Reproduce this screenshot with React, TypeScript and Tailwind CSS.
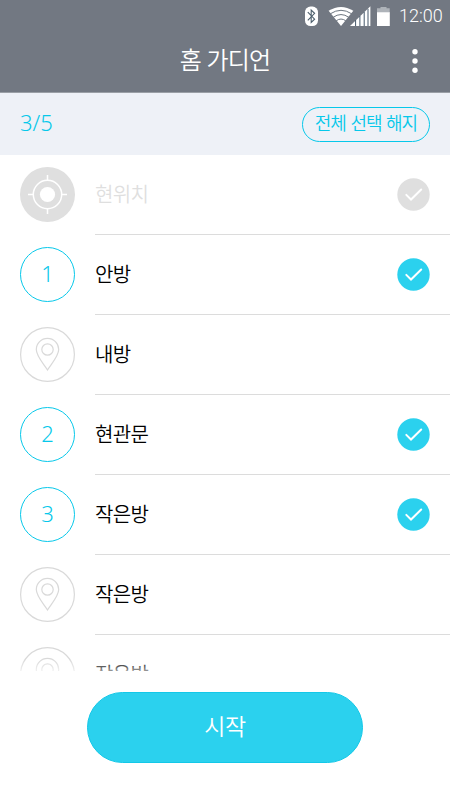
import React from "react";

type Row = { name: string; kind: "current" | "number" | "pin"; order?: number };

const rows: Row[] = [
  { name: "현위치", kind: "current" },
  { name: "안방", kind: "number", order: 1 },
  { name: "내방", kind: "pin" },
  { name: "현관문", kind: "number", order: 2 },
  { name: "작은방", kind: "number", order: 3 },
  { name: "작은방", kind: "pin" },
  { name: "작은방", kind: "pin" },
];

function StatusIcons() {
  return (
    <svg width="90" height="22" viewBox="302 4 90 22" className="block">
      <rect x="305" y="5.6" width="13" height="19.4" rx="5.5" fill="#fff" />
      <path d="M307.8 11.2l6.8 7-3.4 3.3V9l3.4 3.3-6.8 7" fill="none" stroke="#4b5d6b" strokeWidth="1.1" />
      <path d="M328.6 9.8Q341 2 353.3 9.8L341 25z" fill="#fff" />
      <g fill="none" stroke="#6d7680" strokeWidth="1">
        <path d="M330.3 12.8Q341 5.8 351.7 12.8" />
        <path d="M333.2 16.3Q341 10.8 348.8 16.3" />
        <path d="M336.2 19.8Q341 16.3 345.8 19.8" />
      </g>
      <path d="M350 25L370.4 5.2V25z" fill="#fff" />
      <path d="M355.6 19v6M359.9 15v10M364.2 11v14M368 7.8v17.2" stroke="#46596b" strokeWidth="1" />
      <path d="M377 7.2h3.5V6h6v1.2h3.2v4.2H377z" fill="#aeb3b9" />
      <path d="M377 11.2h12.8V25H377z" fill="#fff" />
    </svg>
  );
}

function Check({ muted }: { muted: boolean }) {
  return (
    <svg width="33" height="33" viewBox="0 0 33 33" className="block">
      <circle cx="16.5" cy="16.5" r="16.2" fill={muted ? "#dfdfdf" : "#2bd1ee"} />
      <path d="M9.3 16.9l4.7 4.6L24.2 11.5" fill="none" stroke="#fff" strokeWidth="2" strokeLinecap="round" />
    </svg>
  );
}

function RowIcon({ row }: { row: Row }) {
  if (row.kind === "number") {
    return (
      <div className="flex size-[55px] items-center justify-center rounded-full border border-[#06c8ea] pb-[3px] text-[22px] font-light leading-none text-[#06c8ea]">
        {row.order}
      </div>
    );
  }
  if (row.kind === "current") {
    return (
      <svg width="55" height="55" viewBox="0 0 55 55" className="block">
        <circle cx="27.5" cy="27.5" r="27.5" fill="#dfdfdf" />
        <circle cx="27.5" cy="27.5" r="7.6" fill="#fff" />
        <circle cx="27.5" cy="27.5" r="14.2" fill="none" stroke="#fff" strokeWidth="1.5" />
        <path d="M27.5 8v5M27.5 42v5M8 27.5h5M42 27.5h5" stroke="#fff" strokeWidth="1.5" />
      </svg>
    );
  }
  return (
    <svg width="55" height="55" viewBox="0 0 55 55" className="block" fill="none" stroke="#d9d9d9" strokeWidth="1.2">
      <circle cx="27.5" cy="27.5" r="26.9" />
      <circle cx="27.5" cy="22.5" r="5.7" />
      <path d="M27.5 43C24.5 37.8 16.3 29.5 16.3 22.6a11.2 11.2 0 0 1 22.4 0C38.7 29.5 30.5 37.8 27.5 43z" />
    </svg>
  );
}

export default function App() {
  return (
    <div className="flex h-[800px] w-[450px] flex-col overflow-hidden bg-white font-['Noto_Sans','Noto_Sans_CJK_KR',sans-serif]">
      <header className="h-[93px] shrink-0 border-b border-[#9a9fa6] bg-[#727882] text-white">
        <div className="flex h-[30px] items-center justify-end pr-[7px] pt-px">
          <StatusIcons />
          <span className="ml-[7px] w-[44px] whitespace-nowrap font-['Roboto',sans-serif] text-[18px] font-light leading-none">12:00</span>
        </div>
        <div className="grid h-[62px] grid-cols-[50px_1fr_50px] items-center">
          <span />
          <h1 className="pb-[5px] text-center font-['Noto_Sans_CJK_KR',sans-serif] text-[24px] font-[350] leading-none tracking-[-0.8px] [word-spacing:1px]">
            홈 가디언
          </h1>
          <svg width="6" height="26" viewBox="0 0 6 26" fill="#fff" className="ml-[12px]">
            <circle cx="3" cy="3.8" r="2.7" />
            <circle cx="3" cy="13" r="2.7" />
            <circle cx="3" cy="22.2" r="2.7" />
          </svg>
        </div>
      </header>

      <div className="flex h-[62px] shrink-0 items-center justify-between bg-[#eef1f7] px-5 text-[#06c8ea]">
        <span className="pb-1 text-[22px] font-light leading-none">3/5</span>
        <button className="flex h-[35px] w-[128px] items-center justify-center whitespace-nowrap rounded-full border border-[#06c8ea] pb-[4px] font-['Noto_Sans_CJK_KR',sans-serif] text-[18px] font-[350] leading-none tracking-[-1px] [word-spacing:1.5px]">
          전체 선택 해지
        </button>
      </div>

      <div className="relative h-[516px] shrink-0 overflow-hidden">
        {rows.map((row, i) => (
          <div key={i} className="flex h-[80px] pl-5">
            <div className="w-[75px] shrink-0 pt-3">
              <RowIcon row={row} />
            </div>
            <div className="flex flex-1 items-center justify-between border-b border-[#dcdcdc] pr-5">
              <span
                className={`pb-px font-['Noto_Sans_CJK_KR',sans-serif] text-[20px] font-[350] leading-none tracking-[-0.7px] ${
                  row.kind === "current" ? "text-[#dfdfdf]" : "text-black"
                }`}
              >
                {row.name}
              </span>
              {row.kind !== "pin" && <Check muted={row.kind === "current"} />}
            </div>
          </div>
        ))}
        <div className="absolute inset-x-0 bottom-0 h-3 bg-gradient-to-b from-white/0 to-white/60" />
      </div>

      <footer className="flex flex-1 justify-center pt-[21px]">
        <button className="flex h-[71px] w-[276px] items-center justify-center rounded-full border border-[#13c8e8] bg-[#2bd1ee] pb-[4px] font-['Noto_Sans_CJK_KR',sans-serif] text-[23px] font-[350] leading-none tracking-[-0.5px] text-white">
          시작
        </button>
      </footer>
    </div>
  );
}
